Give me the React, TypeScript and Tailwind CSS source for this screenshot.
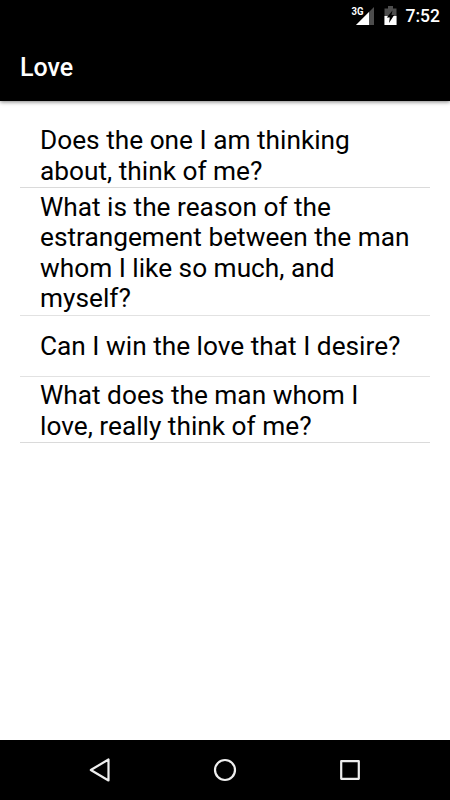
const questions = [
  { text: "Does the one I am thinking about, think of me?", cls: "h-[67px] border-[#dadada] pt-[3px]" },
  { text: "What is the reason of the estrangement between the man whom I like so much, and myself?", cls: "h-[128px] border-[#e2e2e2] pt-[2px]" },
  { text: "Can I win the love that I desire?", cls: "h-[61px] border-[#e2e2e2] pt-px" },
  { text: "What does the man whom I love, really think of me?", cls: "h-[66px] border-[#dadada] pt-[2px]" },
];

export default function App() {
  return (
    <div className="flex h-[800px] w-[450px] flex-col overflow-hidden bg-white font-[Roboto,sans-serif]">
      <header className="h-[101px] shrink-0 bg-black text-white shadow-[0_1px_4px_rgba(0,0,0,0.5)]">
        <div className="flex h-[33px] items-center justify-end pr-[10px]">
          <svg className="h-[33px] w-[60px] shrink-0" viewBox="345 0 60 33">
            <text x="351.500" y="15.300" fill="#fff" fontSize="10" fontWeight="700" textLength="12" lengthAdjust="spacingAndGlyphs">3G</text>
            <path d="M374 7V25H356Z" fill="#4d4d4d" />
            <path d="M369 12V25H356Z" fill="#fff" />
            <path d="M388 6h5v2.500h3.500V25H384.500V8.500H388Z" fill="#4d4d4d" />
            <path d="M384.500 16h12v9h-12Z" fill="#fff" />
            <path d="M392.500 10.500l-1 4.500h2.700l-5.200 8 .8-5.500h-3Z" fill="#000" />
          </svg>
          <span className="w-[35px] shrink-0 whitespace-nowrap text-right text-[17.5px] font-medium leading-none">7:52</span>
        </div>
        <h1 className="flex h-[68px] items-center pl-5 pt-px text-[25px] font-medium">Love</h1>
      </header>
      <main className="flex-1 px-5 pt-5">
        {questions.map((q) => (
          <div key={q.text} className={`flex items-center border-b px-5 text-[26.25px] leading-[30.5px] text-black ${q.cls}`}>
            <p>{q.text}</p>
          </div>
        ))}
      </main>
      <nav className="flex h-[60px] shrink-0 items-center justify-center bg-black">
        <svg className="h-[60px] w-[310px]" viewBox="70 740 310 60" fill="none" stroke="#eee" strokeWidth="2.2">
          <path d="M108.500 759.500v21L90.800 770Z" strokeLinejoin="round" />
          <circle cx="225" cy="770" r="10" />
          <path d="M341.200 761.200h17.600v17.600h-17.600Z" strokeLinejoin="round" />
        </svg>
      </nav>
    </div>
  );
}
